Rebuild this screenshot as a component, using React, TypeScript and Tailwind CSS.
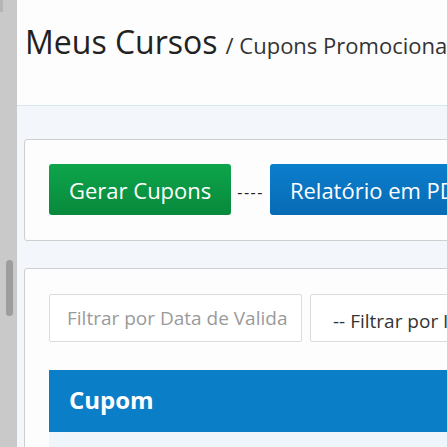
import React from "react";

export default function App() {
  return (
    <div className="flex w-[447px] h-[447px] overflow-hidden" style={{ fontFamily: '"Open Sans", "Noto Sans", sans-serif' }}>
      <div className="relative w-[17px] shrink-0 bg-[#c9c9c9] flex flex-col">
        <div className="w-[3px] h-[12px] bg-[#b5b5b5]" />
        <div className="pt-[248px] pl-[6px]">
          <div className="w-[7px] h-[56px] rounded-full bg-[#9d9d9d]" />
        </div>
      </div>
      <div className="flex-1 min-w-0 overflow-hidden flex flex-col bg-[#f3f7fb]">
        <div className="h-[106px] shrink-0 bg-[#fdfdfd] border-b border-[#d6e5f0] pl-[8px] pt-[22px] whitespace-nowrap">
          <span className="text-[32px] leading-[40px] text-[#222]">Meus Cursos</span>
          <span className="text-[22px] text-[#333] ml-[8px]">/ Cupons Promocionais</span>
        </div>
        <div className="pl-[7px] pt-[33px] w-[700px]">
          <div className="bg-[#fdfdfd] border border-[#cfcfcf] rounded-[3px] h-[102px] px-[24px] pt-[24px] flex items-start">
            <button className="h-[51px] px-[20px] rounded-[3px] bg-gradient-to-b from-[#0ea54c] to-[#08893b] text-white text-[22px] leading-none whitespace-nowrap">
              Gerar Cupons
            </button>
            <span className="mx-[6px] h-[51px] pt-[5px] flex items-center text-[16px] text-[#222] tracking-[1.5px]">----</span>
            <button className="h-[51px] px-[20px] rounded-[3px] bg-gradient-to-b from-[#0b7ecd] to-[#086bb4] text-white text-[22px] leading-none whitespace-nowrap">
              Relatório em PDF
            </button>
          </div>
          <div className="mt-[27px] bg-[#fdfdfd] border border-[#cfcfcf] rounded-[3px] px-[24px] pt-[25px] h-[300px]">
            <div className="flex gap-[8px]">
              <div className="w-[253px] h-[48px] border border-[#dcdcdc] rounded-[2px] bg-white pl-[17px] pr-[14px] flex items-center">
                <span className="block overflow-hidden whitespace-nowrap text-[19px] text-[#9a9a9a]">Filtrar por Data de Validade</span>
              </div>
              <div className="w-[300px] h-[48px] border border-[#dcdcdc] rounded-[2px] bg-white pl-[22px] pt-[6px] flex items-center overflow-hidden whitespace-nowrap text-[19px] text-[#333]">
                -- Filtrar por Instrutor --
              </div>
            </div>
            <div className="mt-[28px] h-[62px] bg-[#0a7ec6] pl-[20px] pb-[2px] flex items-center">
              <span className="text-white font-bold text-[24px]">Cupom</span>
            </div>
            <div className="h-[40px] bg-[#eef5fb]" />
          </div>
        </div>
      </div>
    </div>
  );
}
